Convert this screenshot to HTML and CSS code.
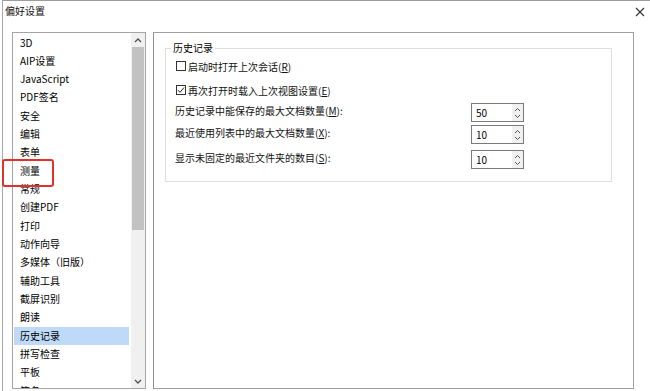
FILE: index.html
```html
<!DOCTYPE html>
<html lang="zh-CN">
<head>
<meta charset="utf-8">
<title>偏好设置</title>
<link rel="stylesheet" href="styles.css">
</head>
<body>
<div class="window">
  <div class="titlebar">
    <span class="title">偏好设置</span>
    <svg class="close" width="10" height="10" viewBox="0 0 10 10"><path d="M1 1L9 9M9 1L1 9" stroke="#333" stroke-width="1.1" fill="none"/></svg>
  </div>
  <div class="main">
    <div class="list">
      <ul class="items">
        <li>3D</li>
        <li>AIP设置</li>
        <li>JavaScript</li>
        <li>PDF签名</li>
        <li>安全</li>
        <li>编辑</li>
        <li>表单</li>
        <li>测量</li>
        <li>常规</li>
        <li>创建PDF</li>
        <li>打印</li>
        <li>动作向导</li>
        <li>多媒体（旧版）</li>
        <li>辅助工具</li>
        <li>截屏识别</li>
        <li>朗读</li>
        <li class="selected">历史记录</li>
        <li>拼写检查</li>
        <li>平板</li>
        <li>签名</li>
        <li>全屏</li>
      </ul>
      <div class="scrollbar">
        <div class="arrow"><svg width="8" height="5" viewBox="0 0 8 5"><path d="M1 4L4 1L7 4" stroke="#505050" stroke-width="1.3" fill="none"/></svg></div>
        <div class="thumb"></div>
        <div class="track"></div>
        <div class="arrow"><svg width="8" height="5" viewBox="0 0 8 5"><path d="M1 1L4 4L7 1" stroke="#505050" stroke-width="1.3" fill="none"/></svg></div>
      </div>
    </div>
    <div class="panel">
      <fieldset class="group">
        <legend>历史记录</legend>
        <div class="check-row first"><span class="box"></span><span>启动时打开上次会话(<u>R</u>)</span></div>
        <div class="check-row second"><span class="box checked"><svg width="8" height="8" viewBox="0 0 8 8"><path d="M1 4.2L3 6.3L7 1.5" stroke="#222" stroke-width="1" fill="none"/></svg></span><span>再次打开时载入上次视图设置(<u>E</u>)</span></div>
        <div class="spin-row r3"><span class="label">历史记录中能保存的最大文档数量(<u>M</u>):</span><div class="spinner"><span class="val">50</span><span class="btns"><svg width="7" height="14" viewBox="0 0 7 14"><path d="M1 5L3.5 2.5L6 5M1 9L3.5 11.5L6 9" stroke="#555" stroke-width="1" fill="none"/></svg></span></div></div>
        <div class="spin-row r4"><span class="label">最近使用列表中的最大文档数量(<u>X</u>):</span><div class="spinner"><span class="val">10</span><span class="btns"><svg width="7" height="14" viewBox="0 0 7 14"><path d="M1 5L3.5 2.5L6 5M1 9L3.5 11.5L6 9" stroke="#555" stroke-width="1" fill="none"/></svg></span></div></div>
        <div class="spin-row r5"><span class="label">显示未固定的最近文件夹的数目(<u>S</u>):</span><div class="spinner"><span class="val">10</span><span class="btns"><svg width="7" height="14" viewBox="0 0 7 14"><path d="M1 5L3.5 2.5L6 5M1 9L3.5 11.5L6 9" stroke="#555" stroke-width="1" fill="none"/></svg></span></div></div>
      </fieldset>
    </div>
  </div>
</div>
<div class="annotation"></div>
</body>
</html>
```
FILE: styles.css
```css
* { box-sizing: border-box; }
html, body {
  margin: 0;
  padding: 0;
  width: 650px;
  height: 391px;
  overflow: hidden;
  background: #fff;
}
body {
  font-family: "Noto Sans CJK SC", "Microsoft YaHei", sans-serif;
  font-size: 10px;
  color: #111;
  position: relative;
}
.window {
  margin-left: 2px;
  height: 391px;
  border-left: 1px solid #a8a8a8;
  border-top: 1px solid #9c9c9c;
}
.titlebar {
  height: 20px;
  display: flex;
  align-items: center;
  justify-content: space-between;
  padding: 0 5px 0 2px;
}
.title { line-height: 20px; }
.close { display: block; margin-top: 2px; }
.main {
  display: flex;
  align-items: flex-start;
  gap: 7px;
  padding: 11px 0 0 9px;
}
.list {
  width: 134px;
  height: 357px;
  border: 1px solid #a5a5a5;
  display: flex;
  overflow: hidden;
}
.items {
  list-style: none;
  margin: 0;
  padding: 0.5px 2px 0 1px;
  flex: 1;
  overflow: hidden;
}
.items li {
  height: 18.33px;
  line-height: 18.33px;
  padding-left: 6px;
  white-space: nowrap;
  color: #000;
}
.items li.selected { background: #bfdaf8; }
.scrollbar {
  width: 14px;
  background: #f0f0f0;
  display: flex;
  flex-direction: column;
}
.arrow {
  height: 14px;
  display: flex;
  align-items: center;
  justify-content: center;
}
.thumb {
  height: 183px;
  margin: 0 1px;
  background: #c2c2c2;
}
.track { flex: 1; }
.panel {
  width: 481px;
  height: 357px;
  border: 1px solid #a0a0a0;
  border-left-color: #8e8e8e;
}
.group {
  width: 447px;
  margin: 7px 0 0 11px;
  padding: 0 0 12px 9px;
  border: 1px solid #dedede;
}
.group legend {
  padding: 0 2px;
  margin-left: -4px;
  line-height: 16px;
  color: #000;
}
.check-row {
  display: flex;
  align-items: center;
  gap: 2px;
  height: 20px;
  padding-left: 1px;
}
.check-row.second { margin-top: 4px; }
.box {
  width: 10px;
  height: 10px;
  border: 1px solid #333;
  background: #fff;
  display: flex;
  align-items: center;
  justify-content: center;
}
.spin-row {
  display: grid;
  grid-template-columns: 296px 53px;
  align-items: start;
}
.spin-row .label { line-height: 15px; }
.spin-row.r3 { margin-top: 3px; }
.spin-row.r4 { margin-top: 3px; }
.spin-row.r5 { margin-top: 6px; }
.spinner {
  height: 19px;
  border: 1px solid #7a7a7a;
  display: flex;
  justify-content: space-between;
  background: #fff;
}
.val {
  padding-left: 4px;
  line-height: 17px;
  color: #000;
}
.btns {
  width: 11px;
  background: #f0f0f0;
  display: flex;
  align-items: center;
  justify-content: center;
}
.btns svg { display: block; }
u { text-underline-offset: 1px; }
.annotation {
  position: absolute;
  left: 2px;
  top: 159px;
  width: 52px;
  height: 28px;
  border: 2px solid #e0322c;
  border-radius: 3px;
}
```
